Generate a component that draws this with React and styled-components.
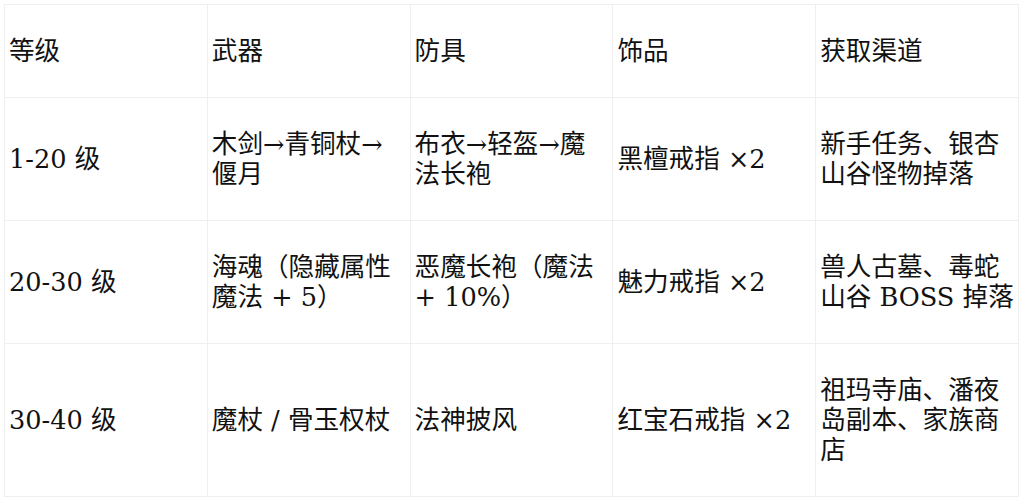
import styled, { createGlobalStyle } from "styled-components";

const GlobalStyle = createGlobalStyle`
    html, body {
        margin: 0;
        padding: 0;
        background: #ffffff;
    }
`;

const Page = styled.div`
    padding: 4px;
    font-family: "DejaVu Serif", "Noto Sans CJK SC", serif;
    color: #111;
`;

const Table = styled.table`
    width: 100%;
    table-layout: fixed;
    border-collapse: collapse;
    font-size: 25.6px;
    line-height: 30px;
`;

const HeadCell = styled.th`
    width: 20%;
    padding: 31px 4px;
    border: 1px solid #efefef;
    font-weight: normal;
    text-align: left;
    vertical-align: middle;
`;

const Cell = styled.td`
    padding: 31px 4px;
    border: 1px solid #efefef;
    text-align: left;
    vertical-align: middle;
`;

const Latin = styled.span`
    font-family: "DejaVu Serif", serif;
`;

const headers = ["等级", "武器", "防具", "饰品", "获取渠道"];

const rows = [
    [<><Latin>1-20 </Latin>级</>, "木剑→青铜杖→偃月", "布衣→轻盔→魔法长袍", <>黑檀戒指 <Latin>×2</Latin></>, "新手任务、银杏山谷怪物掉落"],
    [<><Latin>20-30 </Latin>级</>, <>海魂（隐藏属性魔法 <Latin>+ 5</Latin>）</>, <>恶魔长袍（魔法 <Latin>+ 10%</Latin>）</>, <>魅力戒指 <Latin>×2</Latin></>, <>兽人古墓、毒蛇山谷 <Latin>BOSS</Latin> 掉落</>],
    [<><Latin>30-40 </Latin>级</>, "魔杖 / 骨玉权杖", "法神披风", <>红宝石戒指 <Latin>×2</Latin></>, "祖玛寺庙、潘夜岛副本、家族商店"],
];

const App = () => {
    return (
        <>
            <GlobalStyle />
            <Page>
                <Table>
                    <thead>
                        <tr>
                            {headers.map((h) => (
                                <HeadCell key={h}>{h}</HeadCell>
                            ))}
                        </tr>
                    </thead>
                    <tbody>
                        {rows.map((row, r) => (
                            <tr key={r}>
                                {row.map((c, i) => (
                                    <Cell key={i}>{c}</Cell>
                                ))}
                            </tr>
                        ))}
                    </tbody>
                </Table>
            </Page>
        </>
    );
};

export default App;
